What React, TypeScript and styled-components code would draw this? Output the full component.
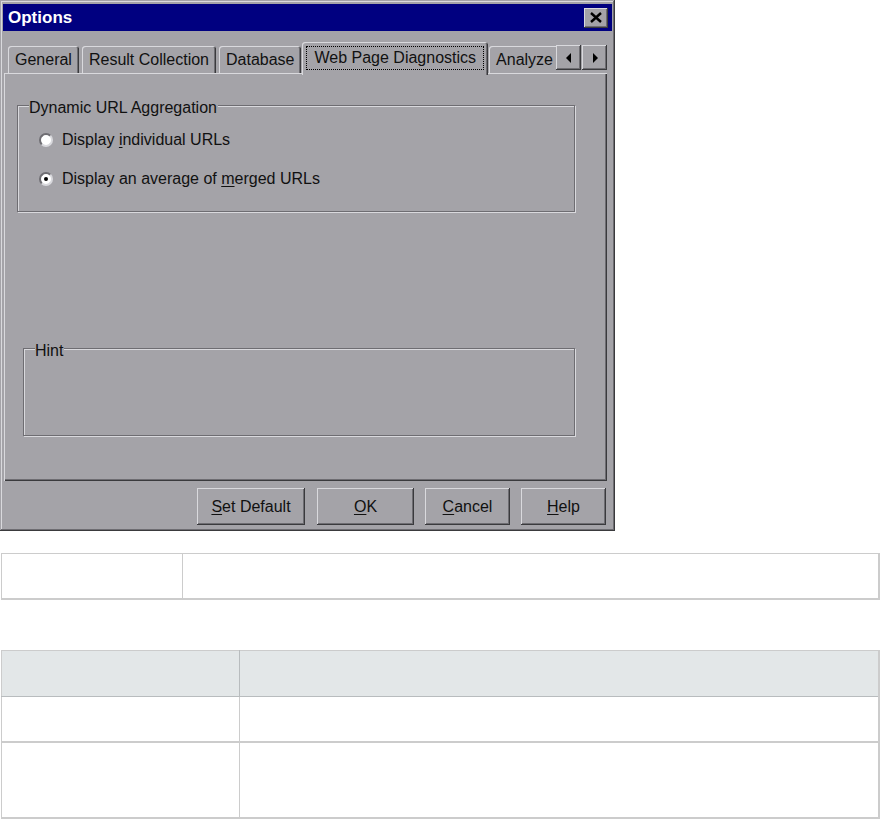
import React from "react";
import styled, { createGlobalStyle } from "styled-components";

const C = {
  face: "#a4a3a8",
  hi: "#d9d9dd",
  shadow: "#6e6d72",
  dark: "#3a3a3d",
  navy: "#000080",
  line: "#cccccc",
};

const Global = createGlobalStyle`
  html, body { margin: 0; padding: 0; background: #fff; }
  body { font-family: "Liberation Sans", Arial, sans-serif; }
`;

const Page = styled.div`
  width: 880px;
  display: flex;
  flex-direction: column;
`;

const Window = styled.div`
  width: 615px;
  height: 531px;
  box-sizing: border-box;
  background: ${C.face};
  padding: 4px 3px 3px 3px;
  display: flex;
  flex-direction: column;
  font-size: 16px;
  color: #111;
  box-shadow: inset -1px -1px ${C.dark}, inset 1px 1px ${C.face},
    inset -2px -2px ${C.shadow}, inset 2px 2px ${C.hi};
`;

const TitleBar = styled.div`
  height: 27px;
  background: ${C.navy};
  display: flex;
  align-items: center;
  justify-content: space-between;
  padding: 0 4px 0 5px;
`;

const Title = styled.span`
  color: #fff;
  font-weight: bold;
  font-size: 17px;
`;

const Raised = styled.div`
  background: ${C.face};
  box-sizing: border-box;
  display: flex;
  align-items: center;
  justify-content: center;
  box-shadow: inset -1px -1px ${C.dark}, inset 1px 1px ${C.hi},
    inset -2px -2px ${C.shadow};
`;

const CloseBtn = styled(Raised)`
  width: 24px;
  height: 20px;
`;

const TabRow = styled.div`
  margin: 11px 5px -2px 1px;
  height: 33px;
  display: flex;
  position: relative;
  z-index: 1;
`;

const TabsClip = styled.div`
  flex: 1;
  overflow: hidden;
  display: flex;
  align-items: flex-end;
  gap: 3px;
  padding-left: 4px;
`;

const Tab = styled.div<{ $active?: boolean }>`
  flex-shrink: 0;
  box-sizing: border-box;
  height: ${(p) => (p.$active ? 33 : 27)}px;
  margin: ${(p) => (p.$active ? "0 -2px" : "0 0 2px 0")};
  padding: ${(p) => (p.$active ? "0 4px 2px" : "0 7px")};
  background: ${C.face};
  border-radius: 3px 3px 0 0;
  display: flex;
  align-items: center;
  justify-content: center;
  white-space: nowrap;
  position: relative;
  z-index: ${(p) => (p.$active ? 2 : 1)};
  box-shadow: inset 1px 1px ${C.hi}, inset -1px 0 ${C.dark},
    inset -2px 0 ${C.shadow};
`;

const FocusLabel = styled.span`
  border: 1px dotted #000;
  padding: 2px 7px;
  line-height: 18px;
`;

const ScrollBtns = styled.div`
  display: flex;
  gap: 1px;
  margin-top: 3px;
  align-self: flex-start;
`;

const ArrowBtn = styled(Raised)`
  width: 25px;
  height: 25px;
`;

const Panel = styled.div`
  margin: 0 5px 0 1px;
  height: 408px;
  box-sizing: border-box;
  background: ${C.face};
  display: flex;
  flex-direction: column;
  box-shadow: inset 1px 1px ${C.hi}, inset -1px -1px ${C.dark},
    inset -2px -2px ${C.shadow};
`;

const GroupBox = styled.div<{ $top: number; $left: number; $w: number; $h: number }>`
  position: relative;
  box-sizing: border-box;
  margin-top: ${(p) => p.$top}px;
  margin-left: ${(p) => p.$left}px;
  width: ${(p) => p.$w}px;
  height: ${(p) => p.$h}px;
  border: 1px solid ${C.shadow};
  box-shadow: inset 1px 1px ${C.hi}, 1px 1px 0 ${C.hi};
  display: flex;
  flex-direction: column;
  gap: 19px;
  padding: 24px 0 0 21px;
`;

const GroupLabel = styled.span`
  position: absolute;
  top: -7px;
  left: 11px;
  background: ${C.face};
  line-height: 18px;
  padding-right: 1px;
`;

const RadioRow = styled.label`
  display: flex;
  align-items: center;
  height: 20px;
  gap: 9px;
  line-height: 20px;
`;

const RadioCircle = styled.span<{ $checked?: boolean }>`
  width: 14px;
  height: 14px;
  box-sizing: border-box;
  border-radius: 50%;
  background: #fff;
  border: 2px solid;
  border-color: ${C.shadow} ${C.hi} ${C.hi} ${C.shadow};
  display: flex;
  align-items: center;
  justify-content: center;
  &::after {
    content: "";
    width: 4px;
    height: 4px;
    border-radius: 50%;
    background: #000;
    display: ${(p) => (p.$checked ? "block" : "none")};
  }
`;

const ButtonRow = styled.div`
  display: flex;
  justify-content: flex-end;
  gap: 11px;
  margin: 7px 6px 0 0;
`;

const PushButton = styled(Raised)<{ $w: number; $gapL?: number }>`
  width: ${(p) => p.$w}px;
  height: 37px;
  margin-left: ${(p) => p.$gapL ?? 0}px;
  font-size: 16px;
`;

const Table = styled.table<{ $mt: number }>`
  border-collapse: collapse;
  margin: ${(p) => p.$mt}px 0 0 1px;
  width: 879px;
  table-layout: fixed;
  border-top: 1px solid ${C.line};
  border-left: 1px solid ${C.line};
  border-right: 2px solid ${C.line};
  border-bottom: 2px solid ${C.line};
`;

const HeadCell = styled.th<{ $w?: number }>`
  background: #e3e7e8;
  height: 45px;
  padding: 0;
  width: ${(p) => (p.$w ? `${p.$w}px` : "auto")};
  border-top: 1px solid ${C.line};
  border-right: 1px solid #b8bcbe;
  border-bottom: 1px solid #b8bcbe;
`;

const Cell = styled.td<{ $w?: number; $h: number }>`
  height: ${(p) => p.$h}px;
  padding: 0;
  width: ${(p) => (p.$w ? `${p.$w}px` : "auto")};
  border-right: 1px solid ${C.line};
  border-bottom: 2px solid ${C.line};
`;

const Accel = styled.u`
  text-decoration: underline;
  text-underline-offset: 2px;
`;

const XIcon = () => (
  <svg width="12" height="11" viewBox="0 0 12 11">
    <path d="M1 1 L11 10 M11 1 L1 10" stroke="#000" strokeWidth="2.4" />
  </svg>
);

const LeftIcon = () => (
  <svg width="6" height="10" viewBox="0 0 6 10">
    <polygon points="5,0 5,10 0,5" fill="#000" />
  </svg>
);

const RightIcon = () => (
  <svg width="6" height="10" viewBox="0 0 6 10">
    <polygon points="1,0 1,10 6,5" fill="#000" />
  </svg>
);

export default function App() {
  return (
    <Page>
      <Global />
      <Window>
        <TitleBar>
          <Title>Options</Title>
          <CloseBtn>
            <XIcon />
          </CloseBtn>
        </TitleBar>
        <TabRow>
          <TabsClip>
            <Tab>General</Tab>
            <Tab>Result Collection</Tab>
            <Tab>Database</Tab>
            <Tab $active>
              <FocusLabel>Web Page Diagnostics</FocusLabel>
            </Tab>
            <Tab>Analyze</Tab>
          </TabsClip>
          <ScrollBtns>
            <ArrowBtn>
              <LeftIcon />
            </ArrowBtn>
            <ArrowBtn>
              <RightIcon />
            </ArrowBtn>
          </ScrollBtns>
        </TabRow>
        <Panel>
          <GroupBox $top={32} $left={13} $w={558} $h={107}>
            <GroupLabel>Dynamic URL Aggregation</GroupLabel>
            <RadioRow>
              <RadioCircle />
              <span>
                Display <Accel>i</Accel>ndividual URLs
              </span>
            </RadioRow>
            <RadioRow>
              <RadioCircle $checked />
              <span>
                Display an average of <Accel>m</Accel>erged URLs
              </span>
            </RadioRow>
          </GroupBox>
          <GroupBox $top={136} $left={19} $w={552} $h={88}>
            <GroupLabel>Hint</GroupLabel>
          </GroupBox>
        </Panel>
        <ButtonRow>
          <PushButton $w={108}>
            <span>
              <Accel>S</Accel>et Default
            </span>
          </PushButton>
          <PushButton $w={97} $gapL={1}>
            <span>
              <Accel>O</Accel>K
            </span>
          </PushButton>
          <PushButton $w={85}>
            <span>
              <Accel>C</Accel>ancel
            </span>
          </PushButton>
          <PushButton $w={85}>
            <span>
              <Accel>H</Accel>elp
            </span>
          </PushButton>
        </ButtonRow>
      </Window>

      <Table $mt={22}>
        <tbody>
          <tr>
            <Cell $w={180} $h={44}></Cell>
            <Cell $h={44}></Cell>
          </tr>
        </tbody>
      </Table>

      <Table $mt={50}>
        <thead>
          <tr>
            <HeadCell $w={237}></HeadCell>
            <HeadCell></HeadCell>
          </tr>
        </thead>
        <tbody>
          <tr>
            <Cell $h={44}></Cell>
            <Cell $h={44}></Cell>
          </tr>
          <tr>
            <Cell $h={74}></Cell>
            <Cell $h={74}></Cell>
          </tr>
        </tbody>
      </Table>
    </Page>
  );
}
